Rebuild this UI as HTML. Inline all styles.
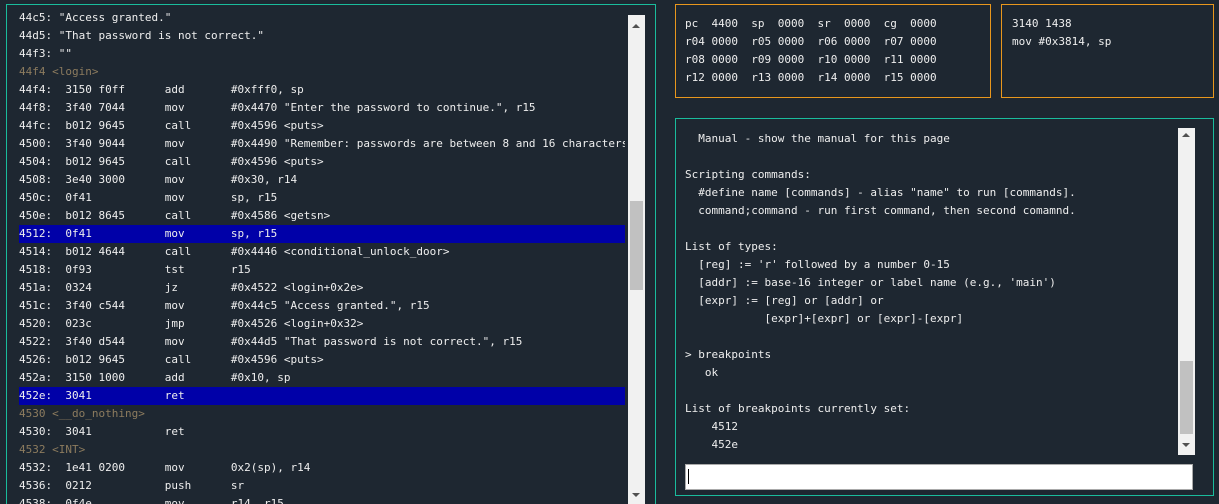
<!DOCTYPE html>
<html style="width:1219px;height:504px;overflow:hidden"><head><meta charset="utf-8"><style>
*{margin:0;padding:0;box-sizing:border-box}
body{width:1219px;height:504px;overflow:hidden;background:#1e2731;font-family:"DejaVu Sans Mono","Liberation Mono",monospace;font-size:11px;color:#eeeeee;position:relative}
.box{position:absolute}
pre{font-family:inherit;font-size:11px;line-height:18px;white-space:pre}
.l{position:absolute;left:19px;height:18px;line-height:18px;white-space:pre;width:606px;overflow:hidden}
.hl{background:#0000a8}
.lab{color:#8c7b5e}
.sb{position:absolute;background:#f1f1f1}
.th{position:absolute;background:#c1c1c1}
.up,.dn{position:absolute;width:0;height:0;border-left:4px solid transparent;border-right:4px solid transparent}
.up{border-bottom:4px solid #505050}.dn{border-top:4px solid #505050}
</style></head><body>
<div class="box" style="left:6px;top:4px;width:650px;height:510px;border:1px solid #1abc9c;border-bottom:none"></div>
<div class="l" style="top:9px">44c5: "Access granted."</div>
<div class="l" style="top:27px">44d5: "That password is not correct."</div>
<div class="l" style="top:45px">44f3: ""</div>
<div class="l lab" style="top:63px">44f4 &lt;login&gt;</div>
<div class="l" style="top:81px">44f4:  3150 f0ff      add       #0xfff0, sp</div>
<div class="l" style="top:99px">44f8:  3f40 7044      mov       #0x4470 "Enter the password to continue.", r15</div>
<div class="l" style="top:117px">44fc:  b012 9645      call      #0x4596 &lt;puts&gt;</div>
<div class="l" style="top:135px">4500:  3f40 9044      mov       #0x4490 "Remember: passwords are between 8 and 16 characters.", r15</div>
<div class="l" style="top:153px">4504:  b012 9645      call      #0x4596 &lt;puts&gt;</div>
<div class="l" style="top:171px">4508:  3e40 3000      mov       #0x30, r14</div>
<div class="l" style="top:189px">450c:  0f41           mov       sp, r15</div>
<div class="l" style="top:207px">450e:  b012 8645      call      #0x4586 &lt;getsn&gt;</div>
<div class="l hl" style="top:225px">4512:  0f41           mov       sp, r15</div>
<div class="l" style="top:243px">4514:  b012 4644      call      #0x4446 &lt;conditional_unlock_door&gt;</div>
<div class="l" style="top:261px">4518:  0f93           tst       r15</div>
<div class="l" style="top:279px">451a:  0324           jz        #0x4522 &lt;login+0x2e&gt;</div>
<div class="l" style="top:297px">451c:  3f40 c544      mov       #0x44c5 "Access granted.", r15</div>
<div class="l" style="top:315px">4520:  023c           jmp       #0x4526 &lt;login+0x32&gt;</div>
<div class="l" style="top:333px">4522:  3f40 d544      mov       #0x44d5 "That password is not correct.", r15</div>
<div class="l" style="top:351px">4526:  b012 9645      call      #0x4596 &lt;puts&gt;</div>
<div class="l" style="top:369px">452a:  3150 1000      add       #0x10, sp</div>
<div class="l hl" style="top:387px">452e:  3041           ret</div>
<div class="l lab" style="top:405px">4530 &lt;__do_nothing&gt;</div>
<div class="l" style="top:423px">4530:  3041           ret</div>
<div class="l lab" style="top:441px">4532 &lt;INT&gt;</div>
<div class="l" style="top:459px">4532:  1e41 0200      mov       0x2(sp), r14</div>
<div class="l" style="top:477px">4536:  0212           push      sr</div>
<div class="l" style="top:495px">4538:  0f4e           mov       r14, r15</div>
<div class="sb" style="left:628px;top:15px;width:17px;height:489px"></div>
<div class="th" style="left:630px;top:201px;width:13px;height:89px"></div>
<div class="up" style="left:632px;top:24px"></div>
<div class="dn" style="left:632px;top:493px"></div>

<div class="box" style="left:675px;top:4px;width:316px;height:94px;border:1px solid #e8971d"></div>
<pre class="box" style="left:685px;top:15px">pc  4400  sp  0000  sr  0000  cg  0000
r04 0000  r05 0000  r06 0000  r07 0000
r08 0000  r09 0000  r10 0000  r11 0000
r12 0000  r13 0000  r14 0000  r15 0000</pre>
<div class="box" style="left:1001px;top:4px;width:213px;height:94px;border:1px solid #e8971d"></div>
<pre class="box" style="left:1012px;top:15px">3140 1438
mov #0x3814, sp</pre>

<div class="box" style="left:675px;top:118px;width:539px;height:378px;border:1px solid #1abc9c"></div>
<pre class="box" style="left:685px;top:130px">  Manual - show the manual for this page

Scripting commands:
  #define name [commands] - alias "name" to run [commands].
  command;command - run first command, then second comamnd.

List of types:
  [reg] := 'r' followed by a number 0-15
  [addr] := base-16 integer or label name (e.g., 'main')
  [expr] := [reg] or [addr] or
            [expr]+[expr] or [expr]-[expr]

&gt; breakpoints
   ok

List of breakpoints currently set:
    4512
    452e</pre>
<div class="sb" style="left:1178px;top:128px;width:17px;height:327px"></div>
<div class="th" style="left:1180px;top:361px;width:13px;height:73px"></div>
<div class="up" style="left:1182px;top:133px"></div>
<div class="dn" style="left:1182px;top:443px"></div>
<div class="box" style="left:685px;top:464px;width:508px;height:26px;background:#fff;border:1px solid #aaa"></div>
<div class="box" style="left:688px;top:469px;width:1px;height:15px;background:#000"></div>
</body></html>
